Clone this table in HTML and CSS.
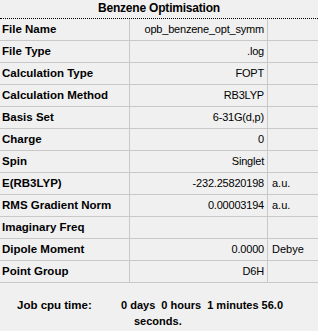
FILE: index.html
```html
<!DOCTYPE html>
<html>
<head>
    <title>Benzene Optimisation</title>
    <link rel="stylesheet" href="styles.css">
</head>
<body>
    <!-- Summary title -->
    <div class="summary-title">Benzene Optimisation</div>

    <!-- Result grid -->
    <div class="summary-grid">
        <div class="row"><div class="label">File Name</div><div class="value">opb_benzene_opt_symm</div><div class="unit"></div></div>
        <div class="row"><div class="label">File Type</div><div class="value">.log</div><div class="unit"></div></div>
        <div class="row"><div class="label">Calculation Type</div><div class="value">FOPT</div><div class="unit"></div></div>
        <div class="row"><div class="label">Calculation Method</div><div class="value">RB3LYP</div><div class="unit"></div></div>
        <div class="row"><div class="label">Basis Set</div><div class="value">6-31G(d,p)</div><div class="unit"></div></div>
        <div class="row"><div class="label">Charge</div><div class="value">0</div><div class="unit"></div></div>
        <div class="row"><div class="label">Spin</div><div class="value">Singlet</div><div class="unit"></div></div>
        <div class="row"><div class="label">E(RB3LYP)</div><div class="value">-232.25820198</div><div class="unit">a.u.</div></div>
        <div class="row"><div class="label">RMS Gradient Norm</div><div class="value">0.00003194</div><div class="unit">a.u.</div></div>
        <div class="row"><div class="label">Imaginary Freq</div><div class="value"></div><div class="unit"></div></div>
        <div class="row"><div class="label">Dipole Moment</div><div class="value">0.0000</div><div class="unit">Debye</div></div>
        <div class="row"><div class="label">Point Group</div><div class="value">D6H</div><div class="unit"></div></div>
    </div>

    <!-- Timing -->
    <div class="job-time">
        <div class="job-label">Job cpu time:</div>
        <div class="job-value">
            <div>0 days&nbsp;&nbsp;0 hours&nbsp;&nbsp;1 minutes 56.0</div>
            <div class="job-rest">seconds.</div>
        </div>
    </div>
</body>
</html>
```

FILE: styles.css
```css
body {
    margin: 0;
    background-color: #f0f0f0;
    font-family: "Liberation Sans", Arial, sans-serif;
    font-size: 11px;
    color: #000;
}

/* Title bar */
.summary-title {
    height: 18px;
    line-height: 17px;
    text-align: center;
    font-weight: bold;
    font-size: 12px;
    letter-spacing: -0.2px;
    border-bottom: 1px dotted #000;
}

/* Grid rows */
.row {
    display: grid;
    grid-template-columns: 130px 138px 1fr;
    height: 21px;
    line-height: 21px;
    border-bottom: 1px solid #c8c8c8;
}

.label {
    padding-left: 2px;
    font-weight: bold;
    font-size: 11.5px;
    border-right: 1px solid #c8c8c8;
    white-space: nowrap;
}

.value {
    padding-right: 3px;
    text-align: right;
    letter-spacing: -0.2px;
    border-right: 1px solid #c8c8c8;
    white-space: nowrap;
}

.unit {
    padding-left: 4px;
    white-space: nowrap;
}

/* Job cpu time footer */
.job-time {
    display: flex;
    padding-top: 14px;
    font-weight: bold;
    line-height: 16px;
}

.job-label {
    width: 104px;
    padding-left: 17px;
    font-size: 11.5px;
}

.job-value {
    white-space: nowrap;
}

.job-rest {
    padding-left: 13px;
}
```
